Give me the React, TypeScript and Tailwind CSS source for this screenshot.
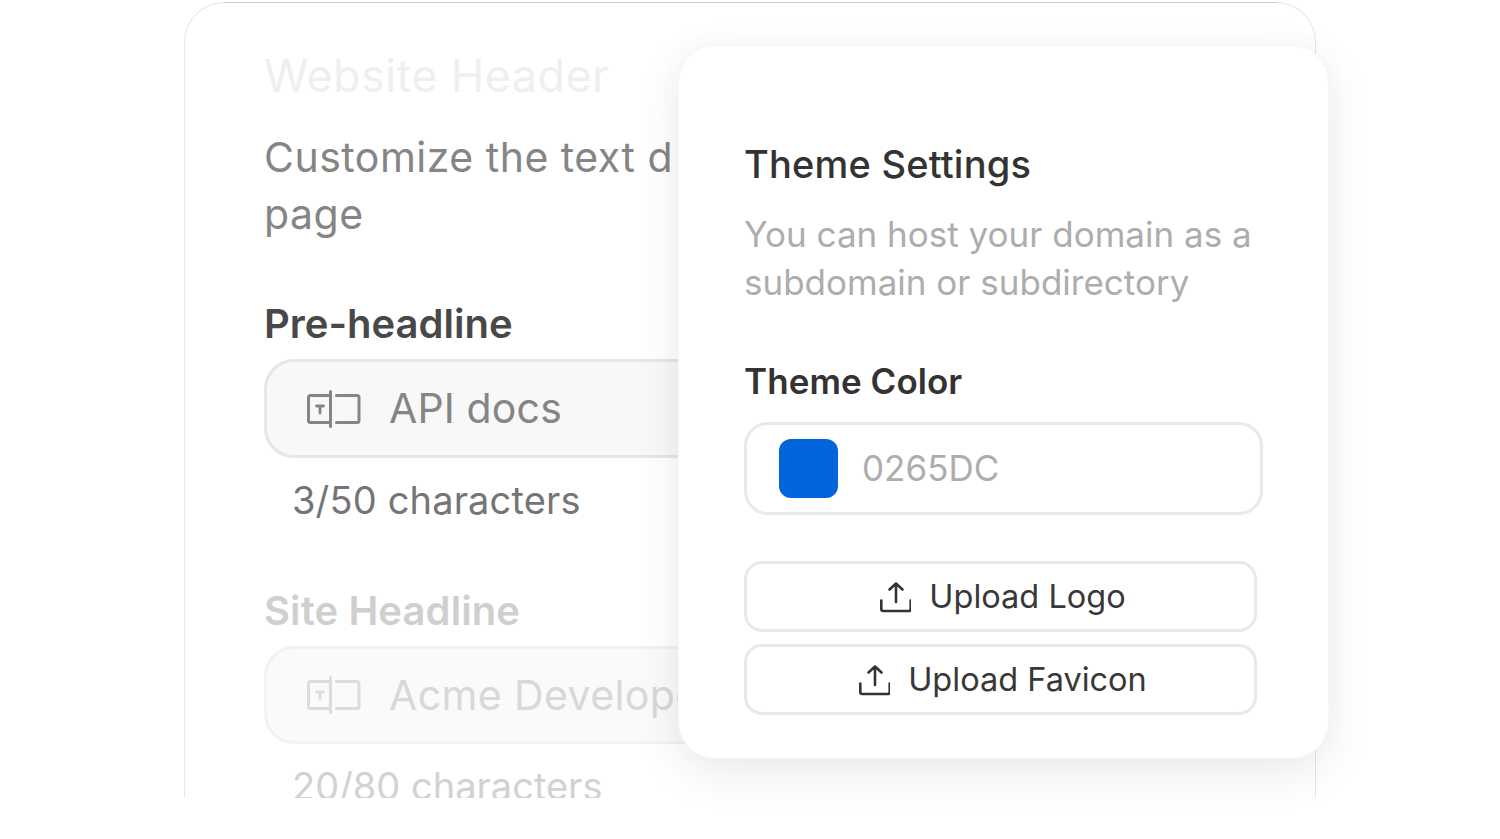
const inter = { fontFamily: 'Inter, "Liberation Sans", sans-serif' };

function FieldIcon({ className }: { className: string }) {
  return (
    <svg width="54" height="38" viewBox="0 0 54 38" fill="none" stroke="currentColor" strokeWidth="3" strokeLinecap="round" strokeLinejoin="round" className={className}>
      <path d="M23 5.5H3.5Q1.5 5.5 1.5 7.5V30.5Q1.5 32.5 3.5 32.5H23" />
      <path d="M23.5 1.5V36.5" />
      <path d="M29.5 5.5H50Q52 5.5 52 7.5V30.5Q52 32.5 50 32.5H29.5" />
      <path d="M9.5 16H16.5M13 16V23" strokeWidth="2.8" />
    </svg>
  );
}

function UploadIcon() {
  return (
    <svg width="32" height="32" viewBox="0 0 32 32" fill="none" stroke="#333333" strokeWidth="2.6" strokeLinecap="round" strokeLinejoin="round">
      <path d="M17 21V2.5M10.5 8.5L17 2.5L23.5 8.5" />
      <path d="M2.3 19.5V28Q2.3 30 4.3 30H29.7Q31.7 30 31.7 28V19.5" />
    </svg>
  );
}

function UploadButton({ label }: { label: string }) {
  return (
    <div className="flex h-[71px] w-[513px] items-center justify-center gap-[18px] rounded-[18px] border-[3px] border-[#e9e9e9] bg-white pl-[4px] text-[32.5px] text-[#383838]">
      <UploadIcon />
      <span className="pt-[2px]">{label}</span>
    </div>
  );
}

export default function App() {
  return (
    <div className="relative h-[839px] w-[1500px] overflow-hidden bg-white" style={inter}>
      <div className="relative ml-[184px] mt-[2px] h-[796px] w-[1132px] overflow-hidden rounded-t-[40px] border-x border-t border-[#e6e6e6] pl-[79px] pt-[43px]">
        <h2 className="text-[45px] font-normal leading-[60px] tracking-[0.4px] text-[#efefef]">Website Header</h2>
        <p className="mt-[23px] w-[409px] overflow-hidden whitespace-nowrap text-[41px] leading-[57px] tracking-[0.5px] text-[#858585]">
          Customize the text displayed on your
          <br />
          page
        </p>
        <h3 className="mt-[54px] text-[40px] font-semibold leading-[54px] text-[#484848]">Pre-headline</h3>
        <div className="mt-[8px] flex h-[99px] w-[760px] items-center gap-[28px] rounded-[30px] border-[3px] border-[#e6e6e6] bg-[#f8f8f8] pl-[40px] text-[41px] tracking-[0.15px] text-[#858585]">
          <FieldIcon className="text-[#858585]" />
          <span>API docs</span>
        </div>
        <p className="mt-[15px] pl-[28px] text-[38px] leading-[54px] tracking-[0.15px] text-[#757575]">3/50 characters</p>
        <h3 className="mt-[57px] text-[40px] font-semibold leading-[54px] tracking-[0.1px] text-[#cfcfcf]">Site Headline</h3>
        <div className="mt-[8px] flex h-[98px] w-[760px] items-center gap-[28px] rounded-[30px] border-[3px] border-[#f2f2f2] bg-[#fafafa] pl-[40px] text-[41px] tracking-[0.4px] text-[#d8d8d8]">
          <FieldIcon className="text-[#dcdcdc]" />
          <span className="pt-[1px]">Acme Developers</span>
        </div>
        <p className="mt-[15px] pl-[28px] text-[38px] leading-[54px] text-[#d2d2d2]">20/80 characters</p>
      </div>
      <div className="absolute left-[224px] top-[2px] h-px w-[1054px] bg-[#cccccc]" />

      <div className="absolute left-[678px] top-[45px] h-[714px] w-[651px] rounded-[37px] border border-[#f6f6f6] bg-white pl-[65px] pt-[91px] shadow-[0_14px_48px_rgba(0,0,0,0.08),0_0_30px_rgba(0,0,0,0.025)]">
        <h2 className="text-[38px] font-medium leading-[54px] tracking-[0.2px] text-[#333333]">Theme Settings</h2>
        <p className="mt-[19px] w-[540px] text-[35px] leading-[48px] text-[#adadad]">
          You can host your domain as a subdomain or subdirectory
        </p>
        <h3 className="mt-[50px] text-[35px] font-semibold leading-[50px] tracking-[0.05px] text-[#333333]">Theme Color</h3>
        <div className="mt-[16px] flex h-[93px] w-[519px] items-center gap-[24px] rounded-[24px] border-[3px] border-[#e9e9e9] pl-[32px] text-[35px] text-[#adadad]">
          <div className="h-[59px] w-[59px] rounded-[12px] bg-[#0265dc]" />
          <span>0265DC</span>
        </div>
        <div className="mt-[46px] flex flex-col gap-[12px]">
          <UploadButton label="Upload Logo" />
          <UploadButton label="Upload Favicon" />
        </div>
      </div>
    </div>
  );
}
